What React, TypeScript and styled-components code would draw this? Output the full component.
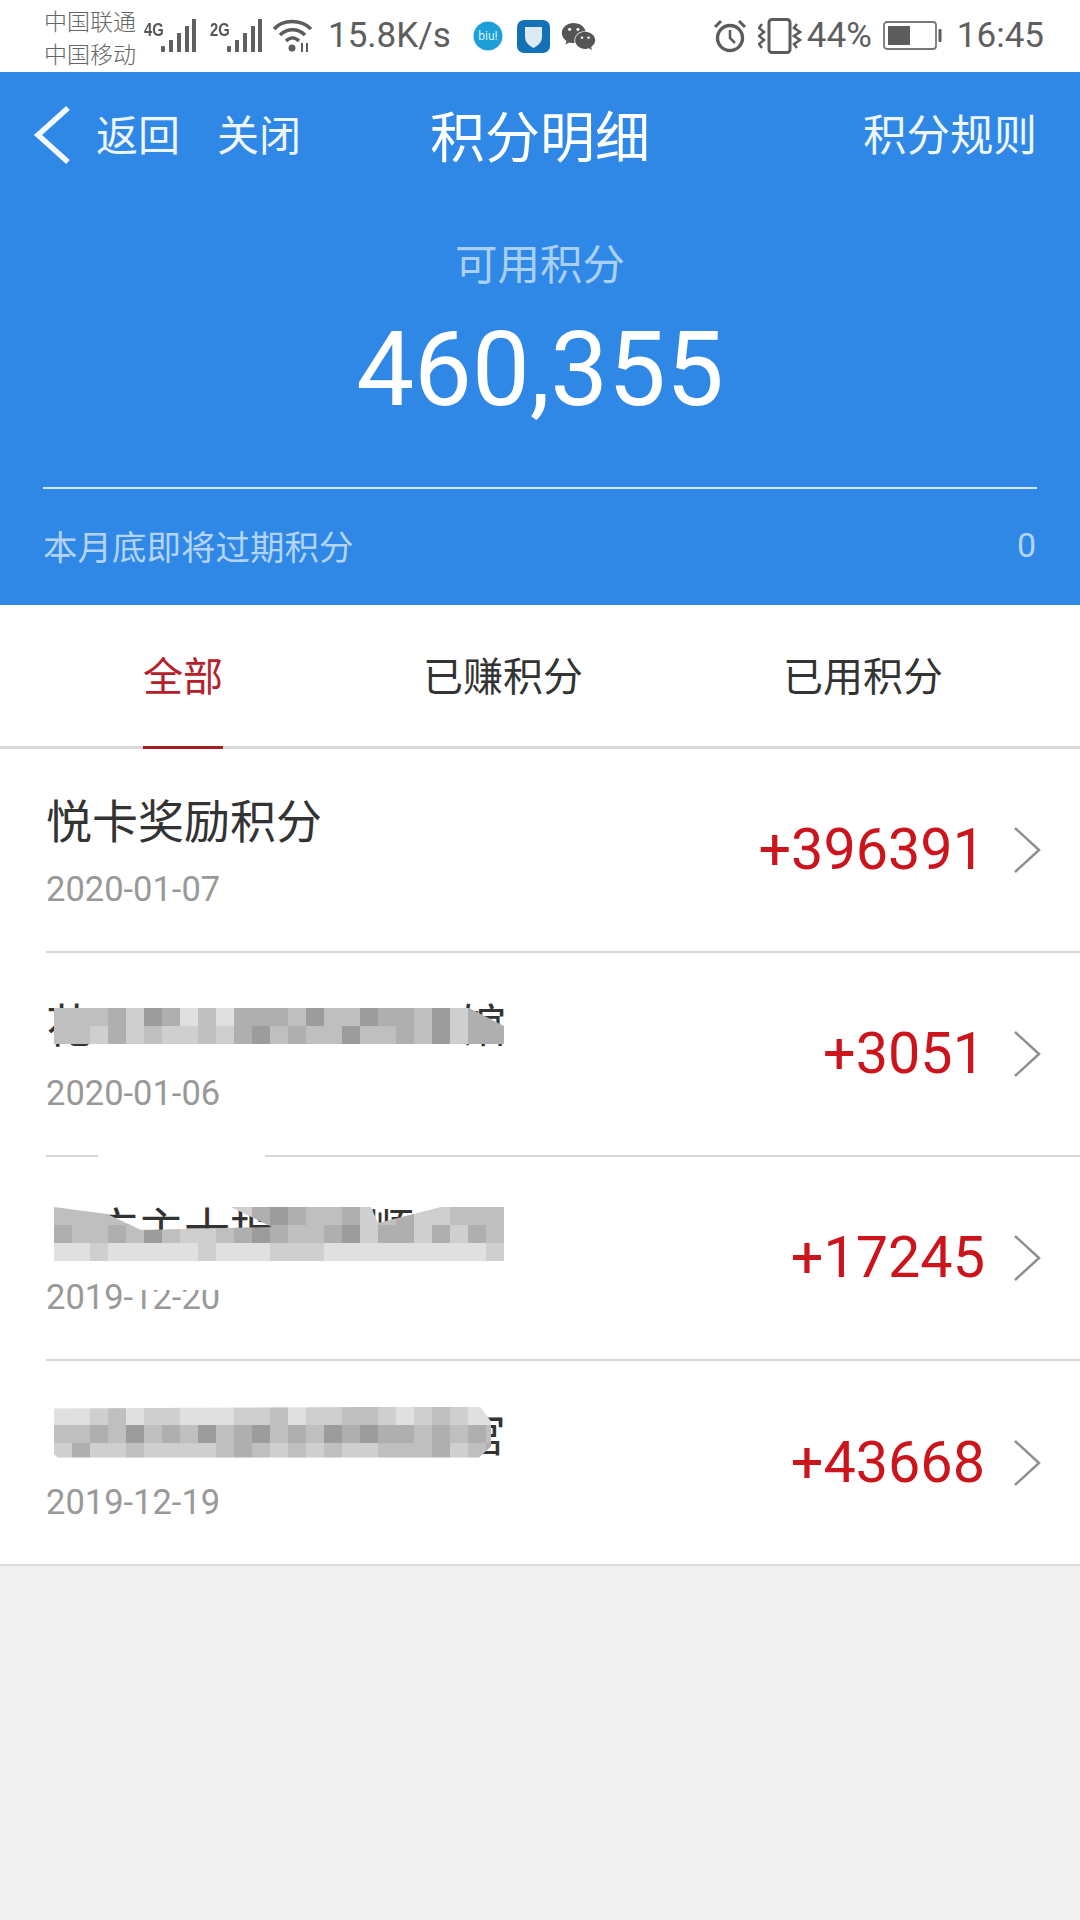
import React, { FC } from 'react';
import styled, { createGlobalStyle } from 'styled-components';
import { FaWeixin } from 'react-icons/fa';

const GlobalStyle = createGlobalStyle`
  html, body {
    margin: 0;
    padding: 0;
    background: #f0f0f0;
  }
  * {
    box-sizing: border-box;
  }
`;

const CJK = '"Noto Sans CJK SC", "Noto Sans", sans-serif';
const LATIN = 'Roboto, "Noto Sans CJK SC", sans-serif';

const Page = styled.div`
  width: 1080px;
  height: 1920px;
  background: #f0f0f0;
  font-family: ${CJK};
  overflow: hidden;
`;

/* status bar */
const StatusBar = styled.div`
  height: 72px;
  background: #fff;
  display: flex;
  align-items: center;
  justify-content: space-between;
  padding: 0 36px 0 44px;
  color: #5c5c5c;
`;

const StatusGroup = styled.div`
  display: flex;
  align-items: center;
`;

const Carrier = styled.div`
  font-size: 23px;
  line-height: 33px;
  width: 100px;
  margin-top: 2px;
  color: #666;
  font-weight: 300;
`;

const NetLabel = styled.span<{ $left?: number }>`
  font-family: "Liberation Sans", sans-serif;
  font-size: 18px;
  font-weight: 700;
  transform: scaleX(0.82);
  transform-origin: left;
  width: 17px;
  margin-left: ${(p) => p.$left || 0}px;
  margin-bottom: 12px;
  color: #555;
`;

const StatusText = styled.span<{ $left?: number }>`
  font-family: ${LATIN};
  font-size: 35px;
  line-height: 40px;
  margin-left: ${(p) => p.$left || 0}px;
  color: #5e5e5e;
`;

const AppIcon = styled.svg<{ $left: number }>`
  margin-left: ${(p) => p.$left}px;
  display: block;
  flex-shrink: 0;
`;

const WechatIcon = styled(FaWeixin)`
  margin-left: 11px;
  color: #555;
  font-size: 35px;
`;

const Bars: FC = () => (
  <svg width="36" height="34" viewBox="0 0 36 34" fill="#606060">
    <rect x="0" y="27" width="4" height="6" rx="1" />
    <rect x="8" y="21" width="4" height="12" />
    <rect x="16" y="14" width="4" height="19" />
    <rect x="24" y="7" width="4" height="26" />
    <rect x="31" y="0" width="4" height="33" />
  </svg>
);

/* blue header */
const Header = styled.div`
  height: 533px;
  background: #2f87e6;
  color: #fff;
  padding: 0 43px;
  display: flex;
  flex-direction: column;
`;

const NavBar = styled.div`
  height: 122px;
  display: flex;
  align-items: center;
  position: relative;
`;

const BackIcon = styled.svg`
  margin-left: -13px;
  margin-top: 3px;
  flex-shrink: 0;
`;

const NavLink = styled.span<{ $left: number }>`
  font-size: 42px;
  line-height: 50px;
  margin-left: ${(p) => p.$left}px;
  color: #eef6fd;
`;

const NavTitle = styled.span`
  position: absolute;
  left: 0;
  right: 0;
  text-align: center;
  font-size: 55px;
  line-height: 64px;
`;

const NavRight = styled.span`
  margin-left: auto;
  font-size: 43.5px;
  line-height: 50px;
  color: #eef6fd;
`;

const Balance = styled.div`
  text-align: center;
`;

const BalanceLabel = styled.div`
  margin-top: 41px;
  font-size: 42.5px;
  line-height: 54px;
  color: #a9d0f6;
`;

const BalanceValue = styled.div`
  margin-top: 21px;
  font-family: ${LATIN};
  font-size: 103px;
  line-height: 120px;
`;

const HeaderRule = styled.div`
  margin-top: 57px;
  height: 2px;
  background: #d5e7fa;
`;

const ExpiryRow = styled.div`
  margin-top: 34px;
  display: flex;
  align-items: center;
  justify-content: space-between;
  font-size: 34.5px;
  line-height: 44px;
  color: #b3d4f6;
`;

const ExpiryValue = styled.span`
  font-family: ${LATIN};
  font-size: 34px;
  margin-right: 1px;
`;

/* tabs */
const Tabs = styled.div`
  height: 144px;
  background: #fff;
  display: flex;
  gap: 200px;
  padding-left: 143px;
  border-bottom: 3px solid #d8d8d8;
`;

const Tab = styled.div<{ $active?: boolean }>`
  height: 144px;
  padding-top: 44px;
  font-size: 40px;
  line-height: 50px;
  color: ${(p) => (p.$active ? '#b5202b' : '#333')};
  border-bottom: 3px solid ${(p) => (p.$active ? '#a81c24' : 'transparent')};
`;

/* list */
const List = styled.div`
  background: #fff;
`;

const Row = styled.div<{ $last?: boolean }>`
  height: ${(p) => (p.$last ? 205 : 204)}px;
  padding-left: ${(p) => (p.$last ? 0 : 46)}px;
  display: flex;
`;

const RowInner = styled.div<{ $last?: boolean }>`
  flex: 1;
  position: relative;
  display: flex;
  align-items: center;
  padding-left: ${(p) => (p.$last ? 46 : 0)}px;
  padding-right: 95px;
  border-bottom: 2px solid #d8d8d8;
`;

const RowText = styled.div`
  flex: 1;
  position: relative;
`;

const RowTitle = styled.div`
  position: relative;
  font-size: 46px;
  line-height: 56px;
  color: #333;
  margin-top: -1px;
  white-space: nowrap;
`;

const RowDate = styled.div`
  position: relative;
  font-family: ${LATIN};
  font-size: 34.5px;
  line-height: 40px;
  margin-top: 23px;
  color: #999;
`;

const Amount = styled.div`
  font-family: ${LATIN};
  font-size: 57.5px;
  line-height: 66px;
  color: #cc141c;
`;

const Chevron = styled.svg`
  position: absolute;
  right: 38px;
  top: 50%;
  margin-top: -24px;
`;

/* privacy mosaic painted over the names */
const Mosaic = styled.div<{ $top: number; $clip: string }>`
  position: absolute;
  left: 8px;
  top: ${(p) => p.$top}px;
  width: 450px;
  display: grid;
  grid-template-columns: repeat(25, 18px);
  grid-auto-rows: 18px;
  clip-path: ${(p) => p.$clip};
  filter: blur(0.5px);
`;

const Tile = styled.span<{ $shade: string }>`
  background: ${(p) => p.$shade};
`;

const Wipe = styled.div<{ $top: number; $left: number; $width: number; $height: number }>`
  position: absolute;
  left: ${(p) => p.$left}px;
  top: ${(p) => p.$top}px;
  width: ${(p) => p.$width}px;
  height: ${(p) => p.$height}px;
  background: #fff;
`;

const SHADES: Record<string, string> = {
  a: '#e0e0e0',
  b: '#cfcfcf',
  c: '#bfbfbf',
  d: '#afafaf',
  e: '#9c9c9c',
};

type Patch = { top: number; clip: string; rows: string[] };

type Item = {
  title: string;
  date: string;
  amount: string;
  patch?: Patch;
};

const items: Item[] = [
  { title: '悦卡奖励积分', date: '2020-01-07', amount: '+396391' },
  {
    // only the fragments left uncovered are readable in the picture
    title: '花　　　　　　　　馆',
    date: '2020-01-06',
    amount: '+3051',
    patch: {
      top: 14,
      clip: 'polygon(0 0, 415px 0, 450px 18px, 450px 100%, 0 100%)',
      rows: [
        'cccdbedacadddcecceddcebdd',
        'ccbdbcbbcbdecdcceccdcebdd',
      ],
    },
  },
  {
    title: '　广主十报　　顺　　',
    date: '2019-12-20',
    amount: '+17245',
    patch: {
      top: 9,
      clip: 'polygon(0 0, 53px 7px, 87px 23px, 218px 20px, 177px 0, 317px 0, 324px 16px, 387px 0, 450px 0, 450px 100%, 0 100%)',
      rows: [
        'ccccdabbccbdedccdbcdbbccc',
        'dccdcecbbcdedccdebddbdbdc',
        'aabaaaaabaaabbbaaaaaaaaab',
      ],
    },
  },
  {
    title: '　　　　　　　　　宫',
    date: '2019-12-19',
    amount: '+43668',
    patch: {
      top: 4,
      clip: 'polygon(0 2px, 426px 0, 437px 15px, 437px 40px, 425px 51px, 4px 51px, 0 48px)',
      rows: [
        'aabcabbaaabbcabbccbabcbaa',
        'ccdcecdcecdecdcededdcdcdc',
        'bdbbcbbbbcdcbcbcbbcccdbcd',
      ],
    },
  },
];

const App: FC = () => (
  <Page>
    <GlobalStyle />
    <StatusBar>
      <StatusGroup>
        <Carrier>
          中国联通
          <br />
          中国移动
        </Carrier>
        <NetLabel>4G</NetLabel>
        <Bars />
        <NetLabel $left={13}>2G</NetLabel>
        <Bars />
        <AppIcon $left={9} width="42" height="36" viewBox="0 0 42 36" fill="none" stroke="#5c5c5c" strokeWidth="3.4">
          <path d="M2 11 C11 1 29 1 39 11" />
          <path d="M8 17 C15 10 26 10 33 17" />
          <path d="M14 23 C18 19 23 19 27 23" />
          <circle cx="20" cy="30" r="3.5" fill="#5c5c5c" stroke="none" />
          <path d="M30 34 V25 M35 34 V25" strokeWidth="2" />
        </AppIcon>
        <StatusText $left={14}>15.8K/s</StatusText>
        <AppIcon $left={22} width="30" height="30" viewBox="0 0 30 30">
          <circle cx="15" cy="15" r="14.5" fill="#1f9fd8" />
          <text x="15" y="19" textAnchor="middle" fontSize="12" fontFamily="Roboto, sans-serif" fill="#d8f3fb">
            biu!
          </text>
        </AppIcon>
        <AppIcon $left={14} width="33" height="33" viewBox="0 0 33 33">
          <rect width="33" height="33" rx="7" fill="#1272b5" />
          <path d="M8 7 H25 V17 C25 23 20 26 16.5 28 C13 26 8 23 8 17 Z" fill="#dbeaf3" />
        </AppIcon>
        <WechatIcon />
      </StatusGroup>
      <StatusGroup>
        <AppIcon $left={0} width="34" height="34" viewBox="0 0 34 34" fill="none" stroke="#5c5c5c" strokeWidth="3.4">
          <circle cx="17" cy="19" r="12.5" />
          <path d="M17 11 V19 L22 24" strokeWidth="2.5" />
          <path d="M2 8 L8 2 M32 8 L26 2" strokeWidth="3" />
        </AppIcon>
        <AppIcon $left={11} width="44" height="36" viewBox="0 0 44 36" fill="none" stroke="#5c5c5c">
          <rect x="11" y="1.5" width="21" height="33" rx="3" strokeWidth="3" />
          <path d="M4 6 L1 10 L6 14 L1 18 L6 22 L1 26 L4 30" strokeWidth="2.5" />
          <path d="M39 6 L36 10 L42 14 L36 18 L42 22 L36 26 L39 30" strokeWidth="2.5" />
        </AppIcon>
        <StatusText $left={5}>44%</StatusText>
        <AppIcon $left={11} width="60" height="30" viewBox="0 0 60 30">
          <rect x="1" y="1" width="52" height="27" rx="3" fill="none" stroke="#777" strokeWidth="1.8" />
          <rect x="5" y="5" width="22" height="19" fill="#5c5c5c" />
          <rect x="55.5" y="8" width="3" height="13" rx="1" fill="#5c5c5c" />
        </AppIcon>
        <StatusText $left={14}>16:45</StatusText>
      </StatusGroup>
    </StatusBar>

    <Header>
      <NavBar>
        <BackIcon width="40" height="64" viewBox="0 0 40 64" fill="none" stroke="#f3f9fe" strokeWidth="5.5">
          <path d="M38 5 L8 32 L38 59" />
        </BackIcon>
        <NavLink $left={26}>返回</NavLink>
        <NavLink $left={37}>关闭</NavLink>
        <NavTitle>积分明细</NavTitle>
        <NavRight>积分规则</NavRight>
      </NavBar>
      <Balance>
        <BalanceLabel>可用积分</BalanceLabel>
        <BalanceValue>460,355</BalanceValue>
      </Balance>
      <HeaderRule />
      <ExpiryRow>
        <span>本月底即将过期积分</span>
        <ExpiryValue>0</ExpiryValue>
      </ExpiryRow>
    </Header>

    <Tabs>
      <Tab $active>全部</Tab>
      <Tab>已赚积分</Tab>
      <Tab>已用积分</Tab>
    </Tabs>

    <List>
      {items.map((item, i) => {
        const last = i === items.length - 1;
        return (
          <Row key={item.date} $last={last}>
            <RowInner $last={last}>
              <RowText>
                <RowTitle>
                  {item.title}
                  {item.patch && (
                    <Mosaic $top={item.patch.top} $clip={item.patch.clip}>
                      {item.patch.rows.join('').split('').map((c, n) => (
                        <Tile key={n} $shade={SHADES[c]} />
                      ))}
                    </Mosaic>
                  )}
                </RowTitle>
                <RowDate>
                  {item.date}
                  {i === 2 && <Wipe $top={-4} $left={87} $width={88} $height={17} />}
                </RowDate>
              </RowText>
              <Amount>{item.amount}</Amount>
              <Chevron width="30" height="48" viewBox="0 0 30 48" fill="none" stroke="#8f8f8f" strokeWidth="2.5">
                <path d="M3 2 L27 24 L3 46" />
              </Chevron>
              {i === 1 && <Wipe $top={202} $left={52} $width={167} $height={2} />}
            </RowInner>
          </Row>
        );
      })}
    </List>
  </Page>
);

export default App;
